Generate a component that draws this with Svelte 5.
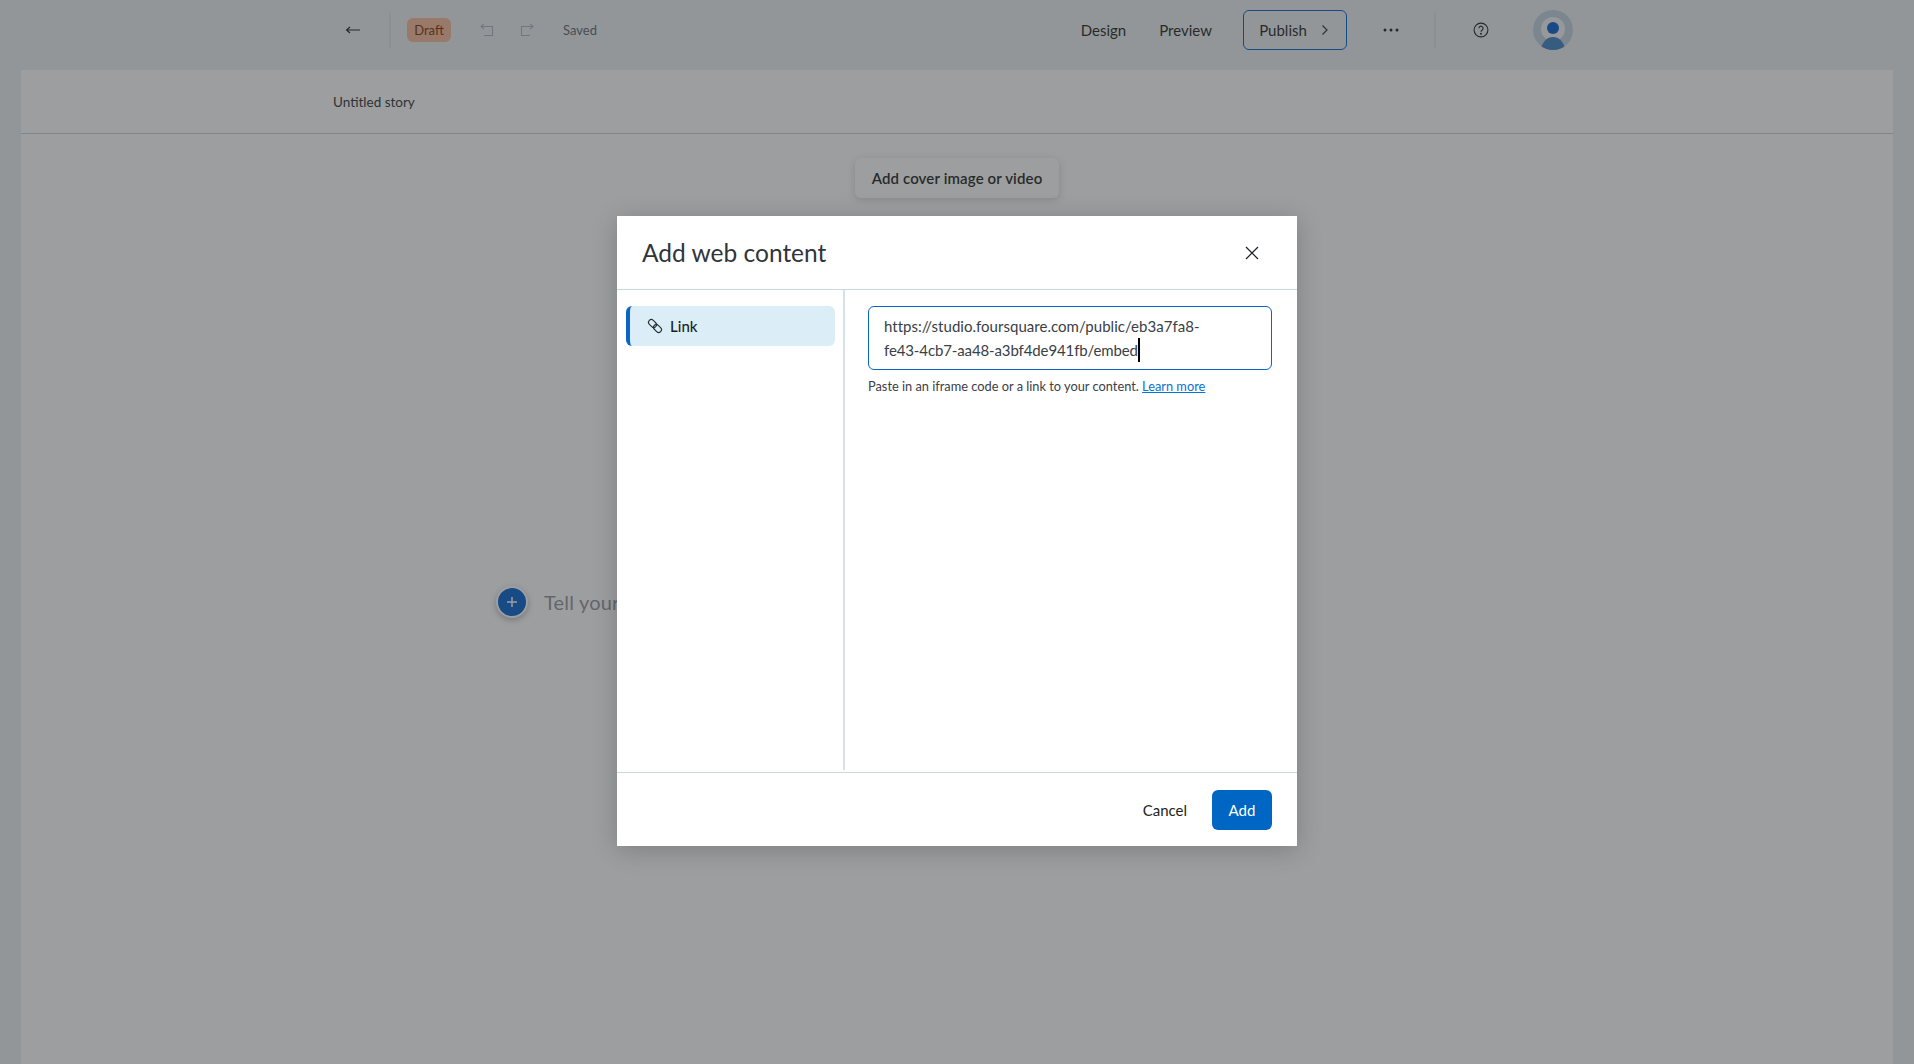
<script>
  const url = 'https://studio.foursquare.com/public/eb3a7fa8-';
  const url2 = 'fe43-4cb7-aa48-a3bf4de941fb/embed';
</script>

<div class="page">
  <header class="topbar">
    <div class="left">
      <button class="back" aria-label="Back">
        <svg width="16" height="10" viewBox="0 0 16 10" fill="none" stroke="#1c1f22" stroke-width="1.2"><path d="M15 5H2M5 2 1.6 5 5 8"/></svg>
      </button>
      <span class="vr first"></span>
      <span class="badge">Draft</span>
      <svg class="hist undo" width="14" height="14" viewBox="0 0 14 14" fill="none" stroke="#a9b7c0" stroke-width="1.1"><path d="M1 3.500H12.500V12.500H4M4 .8 1 3.500 4 6.200"/></svg>
      <svg class="hist redo" width="14" height="14" viewBox="0 0 14 14" fill="none" stroke="#a9b7c0" stroke-width="1.1"><path d="M13 3.500H1.500V12.500H10M10 .8 13 3.500 10 6.200"/></svg>
      <span class="saved">Saved</span>
    </div>
    <div class="right">
      <span class="nav design">Design</span>
      <span class="nav preview">Preview</span>
      <button class="publish">Publish
        <svg width="8" height="12" viewBox="0 0 8 12" fill="none" stroke="#2b3034" stroke-width="1.2"><path d="M1.500 1.500 6 6l-4.500 4.500"/></svg>
      </button>
      <svg class="dots" width="16" height="4" viewBox="0 0 16 4" fill="#1c1f22"><circle cx="2" cy="2" r="1.500"/><circle cx="8" cy="2" r="1.500"/><circle cx="14" cy="2" r="1.500"/></svg>
      <span class="vr second"></span>
      <svg class="help" width="16" height="16" viewBox="0 0 16 16" fill="none" stroke="#1c1f22" stroke-width="1.1"><circle cx="8" cy="8" r="6.900"/><path d="M5.900 6.300a2.100 2.100 0 1 1 3.300 1.700c-.8.500-1.200.9-1.200 1.800"/><circle cx="8" cy="11.800" r=".4" fill="#1c1f22"/></svg>
      <svg class="avatar" width="40" height="40" viewBox="0 0 40 40" aria-label="User">
        <defs><clipPath id="av"><circle cx="20" cy="20" r="20"/></clipPath></defs>
        <g clip-path="url(#av)">
          <rect width="40" height="40" fill="#c0d2de"/>
          <circle cx="20" cy="19" r="12" fill="#f2f4f5"/>
          <ellipse cx="20" cy="42" rx="12.500" ry="15" fill="#3f7fc4"/>
          <circle cx="20" cy="18" r="6" fill="#005fd0"/>
        </g>
      </svg>
    </div>
  </header>

  <main class="canvas">
    <div class="titlebar">Untitled story</div>
    <div class="cover-row"><button class="cover">Add cover image or video</button></div>
    <div class="story">
      <span class="plus">
        <svg width="12" height="12" viewBox="0 0 12 12" stroke="#fff" stroke-width="1.500"><path d="M6 1v10M1 6h10"/></svg>
      </span>
      <span class="tell">Tell your story...</span>
    </div>
  </main>

  <div class="overlay">
    <div class="modal" role="dialog" aria-label="Add web content">
      <div class="modal-head">
        <h2>Add web content</h2>
        <svg class="close" width="14" height="14" viewBox="0 0 14 14" stroke="#1c1f22" stroke-width="1.200"><path d="M1 1l12 12M13 1 1 13"/></svg>
      </div>
      <div class="modal-body">
        <aside class="side">
          <div class="side-item">
            <svg width="18" height="18" viewBox="0 0 18 18" fill="none" stroke="#2b3034" stroke-width="1.100"><g transform="rotate(45 9 9)"><rect x="1" y="6.200" width="9" height="5.600" rx="2.800"/><rect x="8" y="6.200" width="9" height="5.600" rx="2.800"/></g></svg>
            Link
          </div>
        </aside>
        <section class="content">
          <div class="input"><div>{url}</div><div class="line2">{url2}<span class="caret"></span></div></div>
          <p class="hint">Paste in an iframe code or a link to your content. <a href="#learn">Learn more</a></p>
        </section>
      </div>
      <div class="modal-foot">
        <button class="cancel">Cancel</button>
        <button class="add">Add</button>
      </div>
    </div>
  </div>
</div>

<style>
  :global(body) { margin: 0; }
  .page {
    position: relative;
    width: 1914px;
    height: 1064px;
    overflow: hidden;
    background: #ebf0f4;
    font-family: Lato, "Open Sans", sans-serif;
    color: #1c1f22;
    font-size: 15px;
  }
  button { font: inherit; color: inherit; background: none; border: 0; padding: 0; }

  .topbar { height: 70px; display: flex; justify-content: space-between; padding: 10px 341px 0 0; box-sizing: border-box; }
  .left, .right { display: flex; align-items: center; height: 40px; }
  .left { padding-left: 345px; }
  .back { display: flex; width: 16px; }
  .vr { width: 2px; height: 36px; background: #dde4e9; }
  .vr.first { margin-left: 28px; }
  .badge { margin-left: 16px; width: 44px; height: 24px; line-height: 24px; text-align: center; background: #f7b899; color: #7a3206; border-radius: 6px; font-size: 13px; }
  .undo { margin-left: 29px; }
  .redo { margin-left: 26px; }
  .saved { margin-left: 29px; font-size: 13px; color: #5c6670; }
  .nav { font-size: 15px; }
  .preview { margin-left: 33px; }
  .publish { margin-left: 31px; width: 104px; height: 40px; border: 1px solid #005fd0; border-radius: 6px; display: flex; align-items: center; justify-content: center; gap: 14px; padding-right: 2px; box-sizing: border-box; }
  .dots { margin-left: 36px; }
  .second { margin-left: 35px; }
  .help { margin-left: 37px; }
  .avatar { margin-left: 44px; }

  .canvas { position: relative; margin: 0 21px; height: 994px; background: #fff; }
  .titlebar { height: 64px; border-bottom: 1px solid #c4d0d8; padding: 23px 0 0 312px; box-sizing: border-box; font-size: 13.500px; line-height: 18px; color: #2b3034; }
  .cover-row { display: flex; justify-content: center; padding-top: 24px; }
  .cover { width: 204px; height: 40px; background: #fff; border-radius: 6px; box-shadow: 0 2px 8px rgba(0,0,0,.18); font-size: 15px; font-weight: 600; letter-spacing: .13px; }
  .story { position: absolute; left: 475px; top: 516px; display: flex; align-items: center; gap: 16px; }
  .plus { width: 28px; height: 28px; border-radius: 50%; background: #005fd0; border: 2px solid #fff; display: flex; align-items: center; justify-content: center; box-shadow: 0 2px 6px rgba(0,0,0,.3); }
  .tell { font-size: 20px; letter-spacing: .2px; color: #8f959b; }

  .overlay { position: absolute; inset: 0; background: rgba(50,52,54,.48); display: flex; align-items: center; justify-content: center; padding-bottom: 2px; box-sizing: border-box; }
  .modal { width: 680px; height: 630px; background: #fff; display: flex; flex-direction: column; box-shadow: 0 4px 24px rgba(0,0,0,.2); }
  .modal-head { height: 74px; flex: none; box-sizing: border-box; border-bottom: 1px solid #c9d8df; display: flex; align-items: center; justify-content: space-between; padding: 0 38px 0 25px; }
  h2 { margin: 0; font-size: 24.500px; font-weight: 400; color: #30353a; }
  .modal-body { flex: 1; display: flex; min-height: 0; padding-bottom: 2px; }
  .side { width: 228px; box-sizing: border-box; padding: 16px 8px 0 9px; border-right: 2px solid #d5e3e9; flex: none; }
  .side-item { height: 40px; background: #dbedf6; border-left: 4px solid #0a66c2; border-radius: 6px; box-sizing: border-box; display: flex; align-items: center; gap: 6px; padding-left: 16px; font-size: 15px; font-weight: 500; }
  .content { flex: 1; padding: 16px 25px 0 23px; }
  .input { height: 64px; box-sizing: border-box; border: 1px solid #0a66c2; border-radius: 6px; padding: 7px 15px 0; font-size: 15px; letter-spacing: .03px; line-height: 24px; color: #3a4046; }
  .line2 { letter-spacing: -.12px; }
  .caret { display: inline-block; width: 2px; height: 24px; background: #000; vertical-align: top; }
  .hint { margin: 8px 0 0; font-size: 12.800px; line-height: 16px; color: #3a4046; }
  .hint a { color: #0a72d2; }
  .modal-foot { height: 74px; flex: none; box-sizing: border-box; border-top: 1px solid #c9d8df; display: flex; align-items: center; justify-content: flex-end; padding: 0 25px; }
  .cancel { margin-right: 25px; font-size: 15px; }
  .add { width: 60px; height: 40px; border-radius: 6px; background: #0066c4; color: #fff; font-size: 15px; }
</style>
